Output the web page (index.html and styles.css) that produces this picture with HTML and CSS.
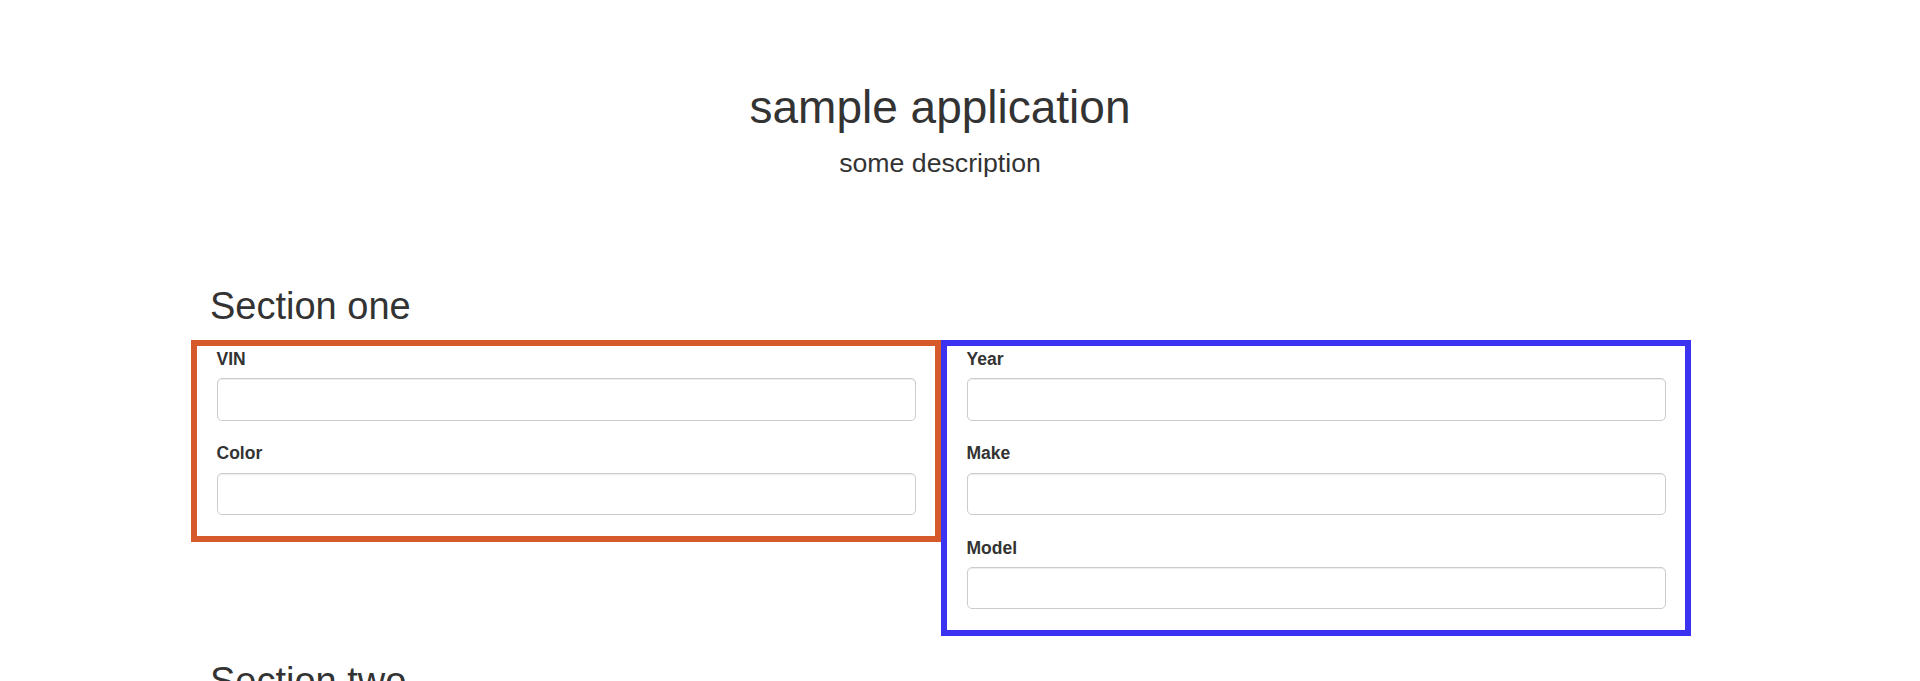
FILE: index.html
```html
<!DOCTYPE html>
<html lang="en">
<head>
    <meta charset="UTF-8">
    <meta name="viewport" content="width=device-width, initial-scale=1.0">
    <title>sample application</title>
    <link rel="stylesheet" href="styles.css">
</head>
<body>
    <!-- page header -->
    <header class="page-header">
        <h1 class="app-title">sample application</h1>
        <p class="lead">some description</p>
    </header>

    <main class="container">
        <!-- section one -->
        <h2 class="section-title section-first">Section one</h2>
        <div class="row">
            <div class="col col-orange">
                <div class="form-group">
                    <label for="vin">VIN</label>
                    <input type="text" id="vin" class="form-control">
                </div>
                <div class="form-group">
                    <label for="color">Color</label>
                    <input type="text" id="color" class="form-control">
                </div>
            </div>
            <div class="col col-blue">
                <div class="form-group">
                    <label for="year">Year</label>
                    <input type="text" id="year" class="form-control">
                </div>
                <div class="form-group">
                    <label for="make">Make</label>
                    <input type="text" id="make" class="form-control">
                </div>
                <div class="form-group">
                    <label for="model">Model</label>
                    <input type="text" id="model" class="form-control">
                </div>
            </div>
        </div>

        <!-- section two -->
        <h2 class="section-title">Section two</h2>
    </main>
</body>
</html>
```

FILE: styles.css
```css
/* reset */
* {
    box-sizing: border-box;
}

body {
    margin: 0;
    padding-right: 40px;
    font-family: "Liberation Sans", Arial, Helvetica, sans-serif;
    font-size: 17.5px;
    line-height: 1.42857;
    color: #333;
    background-color: #fff;
}

/* header */
.page-header {
    text-align: center;
    padding-top: 83px;
}

.app-title {
    font-size: 46px;
    font-weight: 500;
    line-height: 49.5px;
    margin: 0 0 12.5px;
}

.lead {
    font-size: 26.7px;
    font-weight: 300;
    line-height: 36.75px;
    margin: 0;
}

/* main container */
.container {
    width: 1500px;
    margin-left: 191px;
}

.section-title {
    font-size: 38px;
    font-weight: 500;
    line-height: 41.25px;
    margin: 25px 0 12.5px;
    padding-left: 19px;
}

.section-first {
    margin-top: 104px;
}

/* two columns */
.row {
    display: flex;
    align-items: flex-start;
}

.col {
    width: 750px;
    border: 6px solid;
    padding: 1.5px 18.75px 0 19.5px;
}

.col-orange {
    border-color: #d5592a;
}

.col-blue {
    border-color: #3c33f2;
}

/* form fields */
.form-group {
    margin-bottom: 20.5px;
}

.form-group:last-child {
    margin-bottom: 20.5px;
}

.form-group label {
    display: block;
    font-weight: bold;
    line-height: 25px;
    margin-bottom: 6.25px;
}

.form-control {
    display: block;
    width: 100%;
    height: 42.5px;
    padding: 7.5px 15px;
    font-family: inherit;
    font-size: 17.5px;
    color: #555;
    background-color: #fff;
    border: 1px solid #ccc;
    border-radius: 5px;
    box-shadow: inset 0 1px 1px rgba(0, 0, 0, 0.075);
}
```
